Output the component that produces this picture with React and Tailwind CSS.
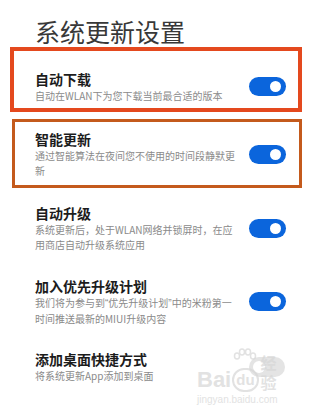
import React from "react";

function Toggle({ on = true }) {
  if (on) {
    return (
      <div className="w-[37px] h-[19px] rounded-full bg-[#0b65dc] flex items-center justify-end pr-[5px] shrink-0">
        <div className="w-[11px] h-[11px] rounded-full bg-white" />
      </div>
    );
  }
  return (
    <div className="w-[36px] h-[20px] rounded-full bg-[#e4e4e4] flex items-center justify-start pl-[4px] shrink-0">
      <div className="w-[12px] h-[12px] rounded-full bg-white" />
    </div>
  );
}

function Row({ title, lines, on = true }) {
  return (
    <div className="flex items-center">
      <div className="w-[214px] shrink-0">
        <div className="text-[14px] leading-[18px] font-bold text-[#1c1c1c] whitespace-nowrap">{title}</div>
        <div className="mt-[1px] text-[10px] leading-[14.5px] text-[#8a8a8a]">
          {lines.map((l, i) => (
            <div key={i} className="whitespace-nowrap">{l}</div>
          ))}
        </div>
      </div>
      <Toggle on={on} />
    </div>
  );
}

const Q = ({ children }) => <span className="font-['Liberation_Sans',sans-serif]">{children}</span>;

export default function App() {
  return (
    <div className="w-[315px] h-[411px] bg-white relative overflow-hidden font-['Noto_Sans_CJK_SC',sans-serif]">
      <div className="pt-[16px] pl-[35px] text-[25px] leading-[30px] text-[#383838]">系统更新设置</div>

      <div className="mt-[1px] ml-[10px] w-[292px] border-4 border-[#e4491e] pt-[19px] pb-[4.5px] pl-[21px]">
        <Row title="自动下载" lines={["自动在WLAN下为您下载当前最合适的版本"]} />
      </div>

      <div className="mt-[7px] ml-[12px] w-[290px] border-[3px] border-[#c45a1c] pt-[8px] pb-[7px] pl-[20px]">
        <Row title="智能更新" lines={["通过智能算法在夜间您不使用的时间段静默更", "新"]} />
      </div>

      <div className="mt-[16px] pl-[35px]">
        <Row title="自动升级" lines={["系统更新后，处于WLAN网络并锁屏时，在应", "用商店自动升级系统应用"]} />
      </div>

      <div className="mt-[25px] pl-[35px]">
        <Row
          title="加入优先升级计划"
          lines={[
            <>我们将为参与到<Q>“</Q>优先升级计划<Q>”</Q>中的米粉第一</>,
            "时间推送最新的MIUI升级内容",
          ]}
        />
      </div>

      <div className="mt-[24px] pl-[35px]">
        <Row title="添加桌面快捷方式" lines={["将系统更新App添加到桌面"]} on={false} />
      </div>

      <div className="absolute left-[197px] top-[348px] w-[95px] pointer-events-none select-none opacity-70">
        <svg className="absolute left-[34px] top-[0px]" width="26" height="20" viewBox="0 0 26 20">
          <g fill="none" stroke="#d6d6d6" strokeWidth="1.5">
            <ellipse cx="6" cy="8" rx="2.5" ry="3" />
            <ellipse cx="11" cy="4" rx="2.5" ry="3" />
            <ellipse cx="17" cy="4" rx="2.5" ry="3" />
            <ellipse cx="22" cy="8" rx="2.5" ry="3" />
          </g>
        </svg>
        <div className="pt-[4px] flex items-end font-['Liberation_Sans',sans-serif] text-[#d6d6d6]">
          <span className="text-[22px] leading-[24px] font-bold">Bai</span>
          <span className="ml-[1px] text-[15px] leading-[20px] font-bold rounded-full border-2 border-[#d6d6d6] px-[2px]">du</span>
          <span className="ml-[2px] text-[16px] leading-[20px] font-bold font-['Noto_Sans_CJK_SC',sans-serif]">经验</span>
        </div>
        <div className="mt-[2px] text-[10px] leading-[12px] font-['Liberation_Sans',sans-serif] text-[#d6d6d6]">jingyan.baidu.com</div>
      </div>
    </div>
  );
}
